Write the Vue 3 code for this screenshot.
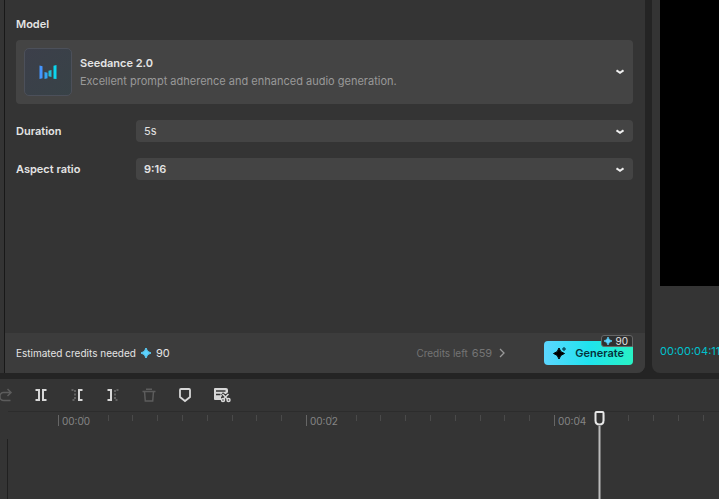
<script setup>
import { ref } from 'vue'

const duration = ref('5s')
const ratio = ref('9:16')

const durations = ['5s', '10s', '15s']
const ratios = ['9:16', '16:9', '1:1']

const cost = 90
const creditsLeft = 659

// Timeline ruler: one segment is two seconds
const segments = ['00:00', '00:02', '00:04']
const ticksPerSegment = 10
const segmentWidth = 248
const rulerStart = 58

// Playhead position in seconds
const playhead = 4.363
const playheadLeft = rulerStart + Math.round((playhead / 2) * segmentWidth)
</script>

<template>
  <div class="editor">
    <div class="workspace">
      <aside class="side"></aside>

      <form class="panel" @submit.prevent>
        <div class="settings">
          <h2 id="model-label" class="label">Model</h2>
          <button type="button" class="model-card" aria-labelledby="model-label model-name">
            <span class="thumb">
              <svg width="18" height="16" viewBox="0 0 18 16" aria-hidden="true">
                <path d="M0.5 1.5l3 0.7v12l-3 0.8z" fill="#4596ff" />
                <path d="M5.5 8l3 0.7v5.5l-3 0.8z" fill="#35a5f5" />
                <path d="M12.500 6l-3 0.7v5.500l3 0.800z" fill="#22bfd8" />
                <path d="M17.500 1l-3 0.700v13l3 0.300z" fill="#0bd5ee" />
              </svg>
            </span>
            <span class="model-text">
              <span id="model-name" class="model-name">Seedance 2.0</span>
              <span class="model-desc">Excellent prompt adherence and enhanced audio generation.</span>
            </span>
            <svg class="chevron" width="8" height="6" viewBox="0 0 8 6" aria-hidden="true">
              <path d="M0.5 1.3l3.5 2.5 3.5-2.5" />
            </svg>
          </button>

          <div class="field">
            <label class="label" for="duration">Duration</label>
            <div class="select-wrap">
              <select id="duration" v-model="duration" class="select">
                <option v-for="d in durations" :key="d" :value="d">{{ d }}</option>
              </select>
              <svg class="chevron over" width="8" height="6" viewBox="0 0 8 6" aria-hidden="true">
                <path d="M0.5 1.3l3.5 2.5 3.5-2.5" />
              </svg>
            </div>
          </div>

          <div class="field">
            <label class="label" for="ratio">Aspect ratio</label>
            <div class="select-wrap">
              <select id="ratio" v-model="ratio" class="select strong">
                <option v-for="r in ratios" :key="r" :value="r">{{ r }}</option>
              </select>
              <svg class="chevron over" width="8" height="6" viewBox="0 0 8 6" aria-hidden="true">
                <path d="M0.5 1.3l3.5 2.5 3.5-2.5" />
              </svg>
            </div>
          </div>
        </div>

        <div class="footer">
          <span class="estimate">Estimated credits needed</span>
          <svg class="star" width="10" height="10" viewBox="0 0 10 10" aria-hidden="true">
            <path d="M5 0Q5.800 4.200 10 5Q5.800 5.800 5 10Q4.200 5.800 0 5Q4.200 4.200 5 0z" />
          </svg>
          <span class="cost">{{ cost }}</span>
          <a href="#" class="credits">
            <span>Credits left</span>
            <span class="amount">{{ creditsLeft }}</span>
            <svg width="6" height="10" viewBox="0 0 6 10" aria-hidden="true">
              <path d="M1 1l4 4-4 4" />
            </svg>
          </a>
          <div class="generate-wrap">
            <button type="submit" class="generate">
              <svg width="14" height="14" viewBox="0 0 14 14" aria-hidden="true">
                <path d="M6 2Q7 6.5 11.5 7.5Q7 8.5 6 13Q5 8.5 0.5 7.5Q5 6.5 6 2z" fill="#000" stroke="#000" />
                <path d="M11 1Q11.5 2.5 13 3Q11.5 3.5 11 5Q10.5 3.5 9 3Q10.5 2.5 11 1z" fill="#0a4a5a" stroke="#0a4a5a" stroke-width="0.5" />
              </svg>
              <span>Generate</span>
            </button>
            <span class="badge">
              <svg class="star" width="8" height="8" viewBox="0 0 10 10" aria-hidden="true">
                <path d="M5 0Q5.800 4.200 10 5Q5.800 5.800 5 10Q4.200 5.800 0 5Q4.200 4.200 5 0z" />
              </svg>
              {{ cost }}
            </span>
          </div>
        </div>
      </form>

      <section class="preview">
        <div class="screen"></div>
        <div class="timecode">00:00:04:11</div>
      </section>
    </div>

    <section class="timeline">
      <div class="toolbar">
        <button type="button" class="tool off" aria-label="Redo">
          <svg width="16" height="16" viewBox="0 0 16 16">
            <path d="M14 5.5H6.5a3.500 3.500 0 0 0-3.500 4v0.500a3.500 3.500 0 0 0 3.500 3.500H13.500M10.500 2l3.500 3.500-3.500 3.500" />
          </svg>
        </button>
        <button type="button" class="tool" aria-label="Split">
          <svg width="16" height="16" viewBox="0 0 16 16">
            <path d="M2.5 3h3.5v10h-3.5M13.5 3h-3.5v10h3.5" stroke-width="2" />
          </svg>
        </button>
        <button type="button" class="tool" aria-label="Delete left">
          <svg width="16" height="16" viewBox="0 0 16 16">
            <path d="M2.5 3h3.5v10h-3.5" stroke="#707070" stroke-dasharray="2 1.5" />
            <path d="M13.5 3h-3.5v10h3.5" stroke-width="2" />
          </svg>
        </button>
        <button type="button" class="tool" aria-label="Delete right">
          <svg width="16" height="16" viewBox="0 0 16 16">
            <path d="M2.5 3h3.5v10h-3.5" stroke-width="2" />
            <path d="M13.5 3h-3.5v10h3.5" stroke="#707070" stroke-dasharray="2 1.5" />
          </svg>
        </button>
        <button type="button" class="tool off" aria-label="Delete">
          <svg width="16" height="16" viewBox="0 0 16 16">
            <path d="M1.5 4.5h13M5 2.2h6M3.5 4.5l0.8 9.5h7.4l0.8-9.5" />
          </svg>
        </button>
        <button type="button" class="tool" aria-label="Add marker">
          <svg width="16" height="16" viewBox="0 0 16 16">
            <path d="M4 2h8q1 0 1 1v7l-5 4-5-4V3q0-1 1-1z" stroke-width="1.8" />
          </svg>
        </button>
        <button type="button" class="tool" aria-label="Edit captions">
          <svg width="18" height="16" viewBox="0 0 18 16">
            <path d="M2 1h11q2 0 2 2v4h-4l-3 3v3H2q-1 0-1-1V2q0-1 1-1z" fill="#d8d8d8" stroke="none" />
            <path d="M3 4h9.500M3 7.500h4.500" stroke="#343434" />
            <path d="M9 6.500l6 5M16 6.500l-6 5" stroke="#343434" stroke-width="3" />
            <path d="M9.500 7l5 5M15.500 7l-5 5" stroke-width="1.500" />
            <circle cx="10" cy="13" r="1.500" />
            <circle cx="15.500" cy="13" r="1.500" />
          </svg>
        </button>
      </div>

      <div class="ruler">
        <div
          v-for="segment in segments"
          :key="segment"
          class="segment"
          :style="{ flexBasis: segmentWidth + 'px' }"
        >
          <i v-for="n in ticksPerSegment" :key="n" class="tick"></i>
          <span class="time">{{ segment }}</span>
        </div>
      </div>

      <div class="tracks"></div>

      <div class="playhead" :style="{ left: playheadLeft + 'px' }">
        <svg width="11" height="15" viewBox="0 0 11 15" aria-hidden="true">
          <path d="M2.500 1h6q1 0 1 1v7.500q0 4-4 4t-4-4V2q0-1 1-1z" />
        </svg>
      </div>
    </section>
  </div>
</template>

<style>
body {
  margin: 0;
  background: #242424;
}
</style>

<style scoped>
.editor {
  display: flex;
  flex-direction: column;
  gap: 6px;
  min-height: 100vh;
  overflow: hidden;
  background: #242424;
  color: #e4e4e4;
  font-family: Inter, "Liberation Sans", sans-serif;
  font-size: 11px;
  line-height: 16px;
}

button,
select {
  font: inherit;
  color: inherit;
  border: none;
  padding: 0;
  cursor: pointer;
}

.workspace {
  display: flex;
}

.side {
  flex: 0 0 4px;
  background: #343434;
  border-right: 1px solid #181818;
}

.panel {
  flex: 1;
  min-width: 0;
  display: flex;
  flex-direction: column;
  background: #343434;
  border-radius: 0 0 8px 0;
  overflow: hidden;
}

.settings {
  flex: 1;
  display: flex;
  flex-direction: column;
  gap: 16px;
  padding: 16px 12px 16px 11px;
}

.label {
  margin: 0;
  font-size: 11px;
  font-weight: 600;
}

.model-card {
  display: flex;
  align-items: center;
  gap: 8px;
  margin-top: -8px;
  padding: 8px;
  background: #444;
  border-radius: 4px;
  text-align: left;
}

.thumb {
  display: flex;
  align-items: center;
  justify-content: center;
  width: 48px;
  height: 48px;
  box-sizing: border-box;
  border: 1px solid #4c505a;
  border-radius: 5px;
  background: linear-gradient(135deg, #3c3f4a, #384247);
}

.model-text {
  flex: 1;
  display: flex;
  flex-direction: column;
  gap: 2px;
}

.model-name {
  font-weight: 600;
}

.model-desc {
  color: #999;
}

.chevron {
  margin-right: 1px;
  fill: none;
  stroke: #eee;
  stroke-width: 2;
}

.field {
  display: grid;
  grid-template-columns: 120px 1fr;
  align-items: center;
}

.select-wrap {
  position: relative;
  display: flex;
}

.select {
  flex: 1;
  height: 22px;
  padding: 0 24px 0 8px;
  appearance: none;
  background: #444;
  border-radius: 4px;
}

.select.strong {
  font-weight: 600;
}

.chevron.over {
  position: absolute;
  right: 8px;
  top: 9px;
  pointer-events: none;
}

.footer {
  display: flex;
  align-items: center;
  height: 40px;
  padding: 0 12px 0 11px;
  background: #3c3c3c;
}

.estimate {
  font-size: 10px;
}

.star {
  fill: #5cd3ff;
  stroke: #5cd3ff;
  stroke-width: 1;
}

.footer > .star {
  margin: 0 5px;
}

.credits {
  display: flex;
  align-items: center;
  gap: 4px;
  margin-left: auto;
  margin-right: 39px;
  color: #747474;
  font-size: 10px;
  text-decoration: none;
}

.amount {
  font-size: 11px;
}

.credits svg {
  margin-left: 3px;
  fill: none;
  stroke: #999;
  stroke-width: 1.3;
}

.generate-wrap {
  position: relative;
}

.generate {
  display: flex;
  align-items: center;
  gap: 8px;
  height: 24px;
  padding: 0 9px;
  border-radius: 4px;
  background: linear-gradient(90deg, #5cd6ff, #20e3ee 50%, #28f2c4);
  color: #06303a;
  font-weight: 600;
}

.badge {
  position: absolute;
  right: 0;
  top: -6px;
  display: flex;
  align-items: center;
  gap: 3px;
  height: 10px;
  padding: 0 4px 0 2px;
  border: 1px solid #666;
  border-radius: 3px 3px 0 3px;
  background: #303030;
  font-size: 10px;
  line-height: 10px;
}

.preview {
  flex: 0 0 67px;
  margin-left: 7px;
  padding-left: 8px;
  box-sizing: border-box;
  overflow: hidden;
  background: #343434;
  border-radius: 0 0 0 8px;
}

.screen {
  height: 286px;
  background: #000;
}

.timecode {
  padding: 57px 0 14px;
  color: #00c1cd;
  white-space: nowrap;
}

.timeline {
  position: relative;
  flex: 1;
  display: flex;
  flex-direction: column;
  background: #343434;
}

.toolbar {
  display: flex;
  align-items: center;
  gap: 20px;
  height: 32px;
  margin-left: -3px;
}

.tool {
  display: flex;
  background: none;
}

.tool svg {
  fill: none;
  stroke: #d8d8d8;
  stroke-width: 1.5;
}

.tool.off svg {
  stroke: #5c5c5c;
}

.ruler {
  display: flex;
  height: 28px;
  margin-left: 8px;
  padding-left: 50px;
  box-sizing: border-box;
  border-top: 1px solid #2c2c2c;
}

.segment {
  position: relative;
  display: flex;
  flex-grow: 0;
  flex-shrink: 0;
  padding-top: 3px;
}

.tick {
  flex: 1;
  height: 6px;
  border-left: 1px solid #4a4a4a;
}

.tick:first-child {
  height: 11px;
  border-color: #666;
}

.time {
  position: absolute;
  left: 4px;
  top: 1px;
  color: #858585;
  font-size: 10px;
}

.tracks {
  flex: 1;
  margin-left: 7px;
  border-left: 1px solid #202020;
}

.playhead {
  position: absolute;
  top: 32px;
  bottom: 0;
  display: flex;
  flex-direction: column;
  align-items: center;
  width: 11px;
  margin-left: -5px;
}

.playhead svg {
  flex: none;
  fill: #343434;
  stroke: #e8e8e8;
  stroke-width: 2;
}

.playhead::after {
  content: "";
  flex: 1;
  width: 1px;
  border: solid #777;
  border-width: 0 1px;
  background: #bbb;
}
</style>
